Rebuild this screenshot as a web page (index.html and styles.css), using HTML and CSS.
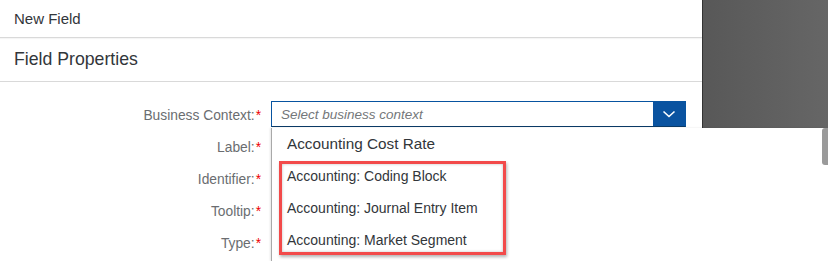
FILE: index.html
```html
<!DOCTYPE html>
<html>
<head>
<meta charset="utf-8">
<link rel="stylesheet" href="styles.css">
</head>
<body>
<div class="page">
  <div class="dialog">
    <div class="title">New Field</div>
    <div class="subtitle">Field Properties</div>
    <div class="form">
      <div class="label">Business Context:<span class="req">*</span></div>
      <div class="combo">
        <div class="combo-input">Select business context</div>
        <div class="combo-btn">
          <svg width="14" height="8" viewBox="0 0 14 8"><path d="M1.5 1.5 L7 6.5 L12.5 1.5" fill="none" stroke="#fff" stroke-width="1.6"/></svg>
        </div>
      </div>
      <div class="label">Label:<span class="req">*</span></div>
      <div></div>
      <div class="label">Identifier:<span class="req">*</span></div>
      <div></div>
      <div class="label">Tooltip:<span class="req">*</span></div>
      <div></div>
      <div class="label">Type:<span class="req">*</span></div>
      <div></div>
    </div>
  </div>
  <div class="backdrop"></div>
  <div class="popover">
    <div class="item first">Accounting Cost Rate</div>
    <div class="highlight">
      <div class="item">Accounting: Coding Block</div>
      <div class="item">Accounting: Journal Entry Item</div>
      <div class="item">Accounting: Market Segment</div>
    </div>
    <div class="scrollbar"></div>
  </div>
</div>
</body>
</html>
```
FILE: styles.css
```css
html, body {
  margin: 0;
  padding: 0;
  height: 100%;
  overflow: hidden;
}
body {
  font-family: "Liberation Sans", Arial, sans-serif;
  color: #32363a;
}
.page {
  position: relative;
  display: flex;
  height: 261px;
  width: 828px;
}
.dialog {
  width: 702px;
  background: #fff;
  display: flex;
  flex-direction: column;
}
.title {
  height: 38px;
  box-sizing: border-box;
  padding-left: 14px;
  line-height: 37px;
  font-size: 15px;
  color: #32363a;
  border-bottom: 1px solid #d9d9d9;
  box-shadow: 0 1px 1px rgba(0,0,0,0.04);
}
.subtitle {
  height: 44px;
  box-sizing: border-box;
  padding-left: 14px;
  line-height: 43px;
  font-size: 17.7px;
  color: #32363a;
  border-bottom: 1px solid #d9d9d9;
}
.form {
  display: grid;
  grid-template-columns: 261px 415px;
  column-gap: 10px;
  grid-auto-rows: 26px;
  row-gap: 6px;
  padding-top: 19px;
}
.label {
  text-align: right;
  font-size: 13.8px;
  color: #6a6d70;
  line-height: 29px;
}
.req {
  color: #e00;
  padding-left: 1px;
}
.combo {
  display: flex;
  height: 26px;
  box-sizing: border-box;
  border: 1px solid #0854a0;
  border-bottom-color: #0b3a66;
}
.combo-input {
  flex: 1;
  font-style: italic;
  font-size: 13.5px;
  color: #74777a;
  padding-left: 9px;
  line-height: 26px;
}
.combo-btn {
  width: 32px;
  background: #0a53a0;
  display: flex;
  align-items: center;
  justify-content: center;
}
.backdrop {
  flex: 1;
  background: linear-gradient(to right, #585858, #666);
  border-left: 1px solid #333;
}
.popover {
  position: absolute;
  left: 271px;
  top: 128px;
  right: 0;
  bottom: 0;
  background: #fff;
  border-left: 1px solid #a9a9a9;
  box-shadow: -1px 0 2px rgba(0,0,0,0.1);
}
.item {
  height: 32px;
  line-height: 32px;
  padding-left: 15px;
  font-size: 14px;
  color: #32363a;
}
.item.first {
  font-size: 15.3px;
}
.highlight {
  margin-left: 7px;
  width: 221px;
  height: 88px;
  overflow: hidden;
  border: 3px solid #f24a4a;
  box-shadow: 1px 2px 3px rgba(0,0,0,0.3), inset 0 0 3px rgba(0,0,0,0.25);
  margin-top: 1px;
}
.highlight .item {
  padding-left: 5px;
  height: 32px;
  line-height: 24px;
}
.scrollbar {
  position: absolute;
  right: 0;
  top: 0;
  width: 6px;
  height: 37px;
  background: #9a9a9a;
  border-radius: 3px 0 0 3px;
}
```
